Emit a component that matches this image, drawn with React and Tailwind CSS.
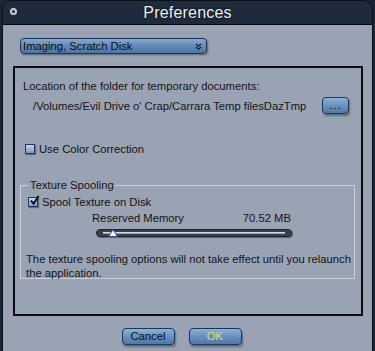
import React from 'react'

const FONT = "font-['Liberation_Sans',Arial,sans-serif]"

function Check({ checked, label }) {
  return (
    <label className="flex items-center gap-[4px] text-[11.25px] leading-[14px] text-[#121212]">
      <span className="relative w-[10px] h-[10px] border border-[#1f3a62] bg-gradient-to-b from-[#c4d4e6] to-[#7e9cc0] shadow-[1px_1px_1px_rgba(0,0,0,0.35)]">
        {checked && (
          <svg viewBox="0 0 12 12" className="absolute -top-[3px] left-[0px] w-[11px] h-[11px]">
            <path d="M2 6 L5 9.5 L10.5 1" fill="none" stroke="#0a0a0a" strokeWidth="2" />
          </svg>
        )}
      </span>
      {label}
    </label>
  )
}

function BlueButton({ children, className = '' }) {
  return (
    <button
      className={`h-[17px] rounded-[4px] border border-[#1c355a] bg-gradient-to-b from-[#8fb1d8] via-[#6a90bd] to-[#4f78a8] shadow-[1px_2px_2px_rgba(0,0,0,0.35)] text-[11.25px] leading-none ${className}`}
    >
      {children}
    </button>
  )
}

export default function App() {
  return (
    <div className={`w-[375px] h-[351px] bg-[#1a2535] overflow-hidden ${FONT}`}>
      <div className="ml-[2px] w-[371px] h-[360px] rounded-t-[9px] rounded-b-[9px] border border-[#0c121c] overflow-hidden flex flex-col">
        {/* title bar */}
        <div className="h-[24px] shrink-0 bg-[#1f2a3d] border-b border-[#05080d] flex items-center relative">
          <span className="absolute left-[7px] top-[7px] w-[7px] h-[7px] rounded-full bg-[#1f2a3d] border-[2px] border-[#c9ced6]" />
          <span className="mx-auto text-[16px] text-[#eef0f3] [text-shadow:0_0_2px_#000] tracking-[0.2px]">
            Preferences
          </span>
        </div>

        {/* body */}
        <div className="flex-1 bg-[#99a3b4] pt-[13px]">
          <div className="ml-[17px] w-[187px] h-[16px] rounded-[4px] border border-[#1c3358] bg-gradient-to-b from-[#86a9d1] via-[#6289b8] to-[#4d76a6] shadow-[1px_1px_2px_rgba(0,0,0,0.4)] flex items-center pl-[2px] pr-[4px]">
            <span className="flex-1 text-[11.25px] leading-none text-[#0c0c0c] pt-[1px]">Imaging, Scratch Disk</span>
            <svg viewBox="0 0 8 8" className="w-[7px] h-[7px]">
              <path d="M1 1 L4 3.5 L7 1 M1 4.5 L4 7 L7 4.5" fill="none" stroke="#0c0c0c" strokeWidth="1.2" />
            </svg>
          </div>

          <div className="ml-[10px] mt-[12px] w-[350px] h-[250px] border-2 border-[#0d0d0d] flex flex-col">
            <p className="ml-[8px] mt-[11px] text-[11.25px] leading-[14px] text-[#141414]">
              Location of the folder for temporary documents:
            </p>
            <div className="mt-[4px] flex items-center">
              <span className="ml-[18px] flex-1 text-[11.25px] leading-[14px] text-[#141414]">
                /Volumes/Evil Drive o' Crap/Carrara Temp filesDazTmp
              </span>
              <BlueButton className="w-[27px] mr-[12px] text-[#0c0c0c] tracking-[1px]">...</BlueButton>
            </div>

            <div className="ml-[10px] mt-[28px]">
              <Check label="Use Color Correction" />
            </div>

            <fieldset className="ml-[5px] mt-[22px] w-[335px] h-[101px] border border-[#c9ced7] pl-[5px] pr-[2px]">
              <legend className="ml-[3px] px-[1px] text-[11.25px] leading-[14px] text-[#141414]">Texture Spooling</legend>
              <div className="mt-[3px] ml-[2px]">
                <Check checked label="Spool Texture on Disk" />
              </div>
              <div className="ml-[66px] w-[199px] mt-[2px] flex justify-between text-[11.25px] leading-[14px] text-[#141414]">
                <span>Reserved Memory</span>
                <span>70.52 MB</span>
              </div>
              <div className="ml-[70px] mt-[4px] w-[196px] h-[8px] rounded-full bg-[#3a404b] border border-[#20252d] shadow-[1px_1px_1px_rgba(0,0,0,0.4)] relative flex items-center px-[6px]">
                <div className="flex-1 h-[2px] bg-gradient-to-b from-[#eef3fa] to-[#6d8fb8]" />
                <svg viewBox="0 0 10 8" className="absolute left-[11px] top-[-1px] w-[10px] h-[8px]">
                  <path d="M5 0.5 L9.5 7.5 L0.5 7.5 Z" fill="#f2f5fa" stroke="#28497a" strokeWidth="1" />
                </svg>
              </div>
              <p className="mt-[15px] text-[11.25px] leading-[14px] text-[#141414]">
                The texture spooling options will not take effect until you relaunch the application.
              </p>
            </fieldset>
          </div>

          <div className="mt-[12px] flex justify-center gap-[14px] pr-[12px]">
            <BlueButton className="w-[53px] text-[#0e0e0e]">Cancel</BlueButton>
            <BlueButton className="w-[53px] text-[#dbe36a]">OK</BlueButton>
          </div>
        </div>
      </div>
    </div>
  )
}
